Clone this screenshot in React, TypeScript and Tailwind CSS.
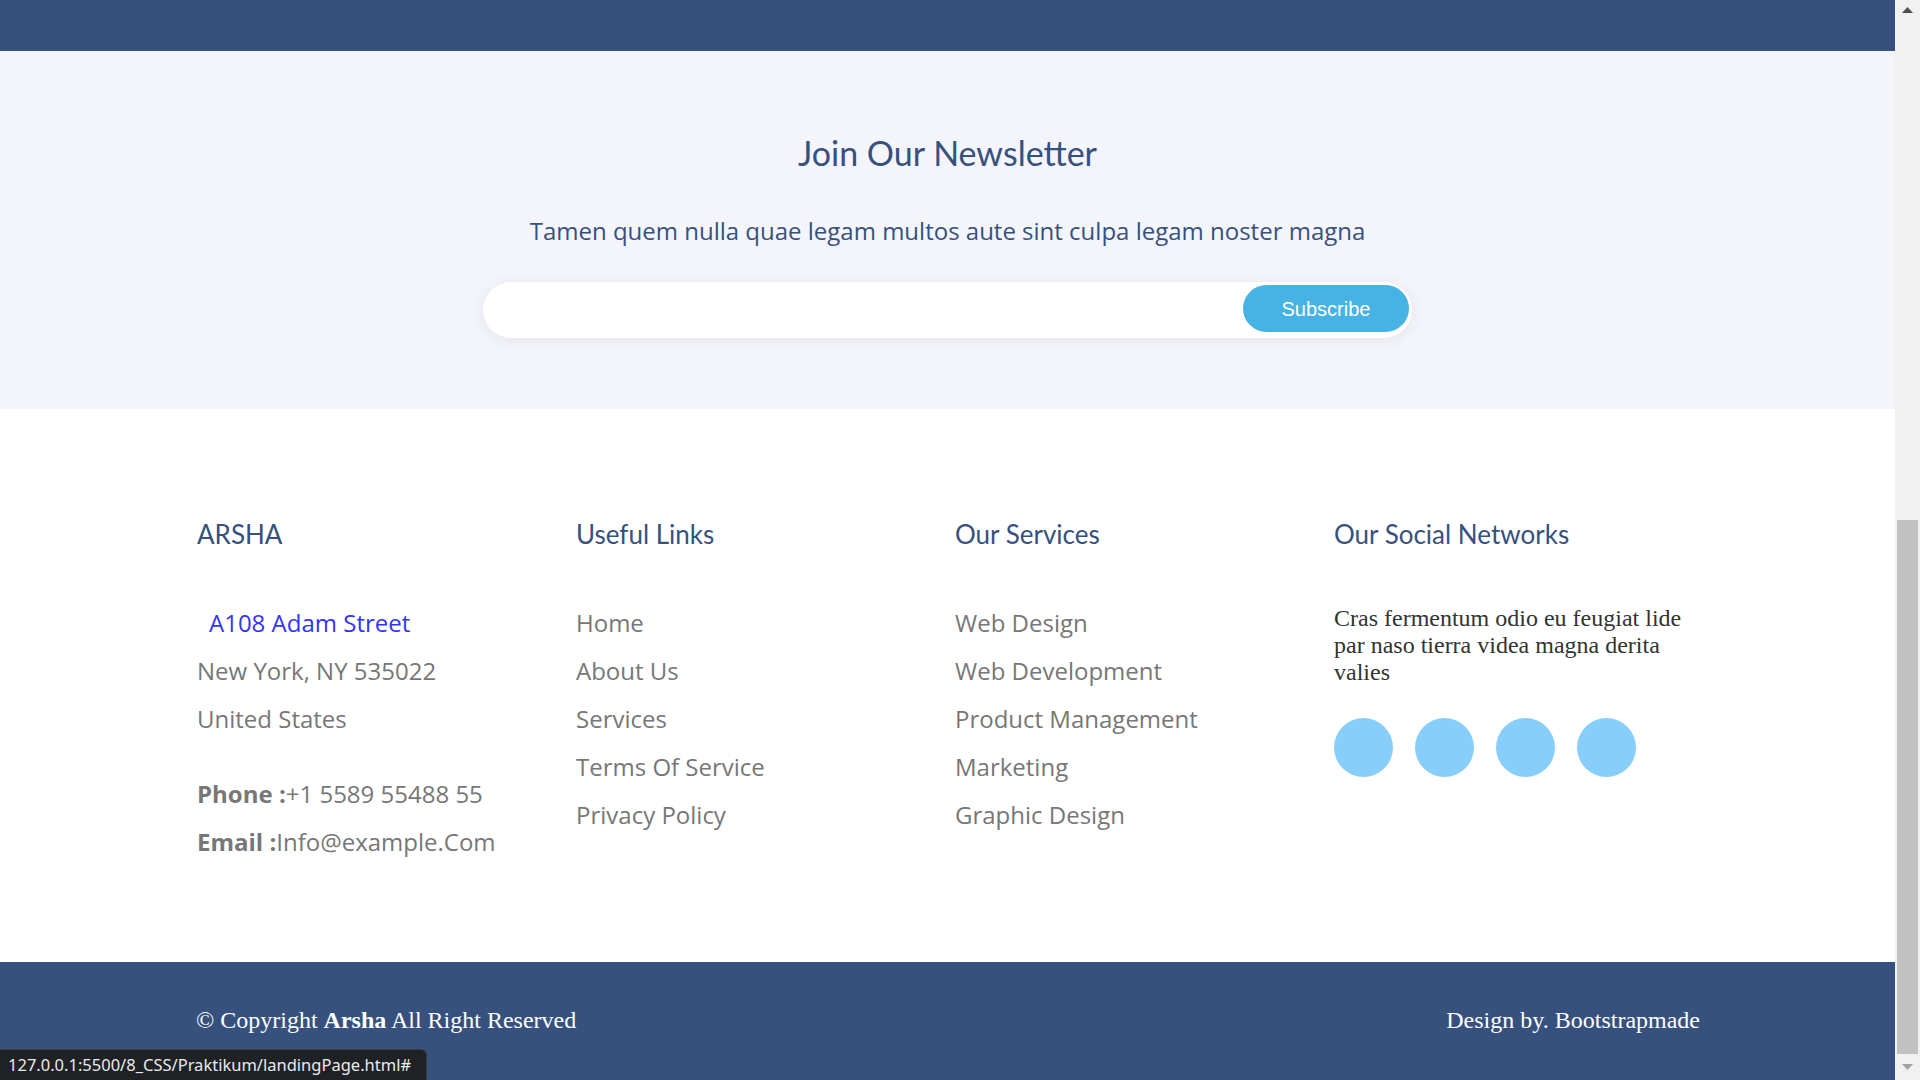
import React from "react";

const usefulLinks = ["Home", "About Us", "Services", "Terms Of Service", "Privacy Policy"];
const services = ["Web Design", "Web Development", "Product Management", "Marketing", "Graphic Design"];

function FooterHeading({ children }: { children: React.ReactNode }) {
  return (
    <h4 className="text-[26px] leading-[32px] text-[#37517e] font-normal font-['Lato',sans-serif]">
      {children}
    </h4>
  );
}

function Scrollbar() {
  return (
    <div className="w-[25px] h-full bg-[#f1f1f1] flex flex-col items-center">
      <div className="h-[20px] flex items-center justify-center">
        <svg width="11" height="6" viewBox="0 0 11 6">
          <path d="M0 6 L5.5 0 L11 6 Z" fill="#505050" />
        </svg>
      </div>
      <div className="h-[500px]" />
      <div className="w-[21px] h-[534px] bg-[#c1c1c1]" />
      <div className="flex-1 flex items-center justify-center">
        <svg width="11" height="6" viewBox="0 0 11 6">
          <path d="M0 0 L11 0 L5.5 6 Z" fill="#a3a3a3" />
        </svg>
      </div>
    </div>
  );
}

export default function App() {
  return (
    <div className="relative flex w-full h-[1080px] overflow-hidden bg-white">
      <div className="flex-1 flex flex-col">
        <div className="h-[51px] bg-[#37517e]" />

        <section className="h-[358px] bg-[#f3f5fa] flex flex-col items-center">
          <h2 className="mt-[80px] text-[34px] leading-[44px] text-[#37517e] font-normal font-['Lato',sans-serif]">
            Join Our Newsletter
          </h2>
          <p className="mt-[41px] text-[24px] leading-[30px] text-[#37517e] font-['Open_Sans',sans-serif]">
            Tamen quem nulla quae legam multos aute sint culpa legam noster magna
          </p>
          <div className="mt-[36px] w-[929px] h-[56px] rounded-full bg-white shadow-[0_2px_15px_rgba(0,0,0,0.07)] flex items-start justify-end pt-[3px] pr-[3px]">
            <button className="w-[166px] h-[47px] rounded-full bg-[#47b2e4] text-white text-[20px] font-['Liberation_Sans',Arial,sans-serif]">
              Subscribe
            </button>
          </div>
        </section>

        <footer className="h-[553px] bg-white">
          <div className="ml-[197px] mt-[109px] grid grid-cols-[379px_379px_379px_379px]">
            <div>
              <FooterHeading>ARSHA</FooterHeading>
              <div className="mt-[49px] text-[24px] leading-[48px] text-[#777777] font-['Open_Sans',sans-serif]">
                <p className="pl-[12px] text-[#3333ff]">A108 Adam Street</p>
                <p>New York, NY 535022</p>
                <p>United States</p>
                <p className="mt-[27px]">
                  <span className="font-bold">Phone :</span>+1 5589 55488 55
                </p>
                <p>
                  <span className="font-bold">Email :</span>Info@example.Com
                </p>
              </div>
            </div>

            <div>
              <FooterHeading>Useful Links</FooterHeading>
              <ul className="mt-[49px] text-[24px] leading-[48px] text-[#777777] font-['Open_Sans',sans-serif]">
                {usefulLinks.map((l) => (
                  <li key={l}>{l}</li>
                ))}
              </ul>
            </div>

            <div>
              <FooterHeading>Our Services</FooterHeading>
              <ul className="mt-[49px] text-[24px] leading-[48px] text-[#777777] font-['Open_Sans',sans-serif]">
                {services.map((s) => (
                  <li key={s}>{s}</li>
                ))}
              </ul>
            </div>

            <div>
              <FooterHeading>Our Social Networks</FooterHeading>
              <p className="mt-[55px] w-[370px] text-[24px] leading-[27px] text-[#333333] font-['Liberation_Serif',serif]">
                Cras fermentum odio eu feugiat lide par naso tierra videa magna derita valies
              </p>
              <div className="mt-[32px] flex gap-[22px]">
                {[0, 1, 2, 3].map((i) => (
                  <a key={i} href="#" className="block w-[59px] h-[59px] rounded-full bg-[#87cefa]" />
                ))}
              </div>
            </div>
          </div>
        </footer>

        <div className="flex-1 bg-[#37517e]">
          <div className="ml-[196px] w-[1504px] mt-[44px] flex justify-between text-[24px] leading-[28px] text-white font-['Liberation_Serif',serif]">
            <p>
              © Copyright <span className="font-bold">Arsha</span> All Right Reserved
            </p>
            <p>Design by. Bootstrapmade</p>
          </div>
        </div>
      </div>

      <Scrollbar />

      <div className="absolute left-0 bottom-0 w-[427px] h-[31px] bg-[#202124] rounded-tr-[6px] border-t border-r border-[#3c3c3c] flex items-center pl-[8px]">
        <span className="text-[16.5px] text-[#e8eaed] font-['Noto_Sans',sans-serif]">
          127.0.0.1:5500/8_CSS/Praktikum/landingPage.html#
        </span>
      </div>
    </div>
  );
}
